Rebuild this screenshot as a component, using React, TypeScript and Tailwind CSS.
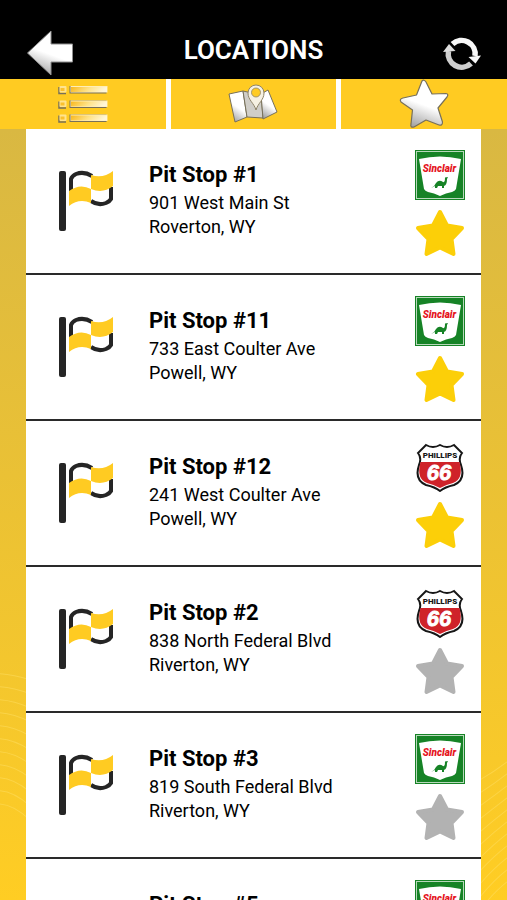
import { useState } from "react";

type Brand = "sinclair" | "phillips";
type Stop = { id: number; street: string; city: string; brand: Brand; favorite: boolean };

const stops: Stop[] = [
  { id: 1, street: "901 West Main St", city: "Roverton, WY", brand: "sinclair", favorite: true },
  { id: 11, street: "733 East Coulter Ave", city: "Powell, WY", brand: "sinclair", favorite: true },
  { id: 12, street: "241 West Coulter Ave", city: "Powell, WY", brand: "phillips", favorite: true },
  { id: 2, street: "838 North Federal Blvd", city: "Riverton, WY", brand: "phillips", favorite: false },
  { id: 3, street: "819 South Federal Blvd", city: "Riverton, WY", brand: "sinclair", favorite: false },
  { id: 5, street: "", city: "", brand: "sinclair", favorite: false },
];

function Gradients() {
  return (
    <svg className="absolute size-0" aria-hidden="true">
      <defs>
        <linearGradient id="silver" x1="0.6" y1="0.2" x2="0.3" y2="1">
          <stop offset="0.4" stopColor="#ffffff" />
          <stop offset="1" stopColor="#a2a2a2" />
        </linearGradient>
        <linearGradient id="gold" x1="0" y1="0" x2="1" y2="0.15">
          <stop offset="0" stopColor="#f9b81c" />
          <stop offset="0.55" stopColor="#ffe38a" />
          <stop offset="1" stopColor="#fff6d8" />
        </linearGradient>
      </defs>
    </svg>
  );
}

function BackIcon() {
  return (
    <svg viewBox="0 0 48 48" className="size-12" aria-hidden="true">
      <path d="M1.500 25 L25 3 V16 H46.500 V34 H25 V47 Z" fill="url(#silver)" stroke="#8f8f8f" strokeWidth="1" strokeLinejoin="round" />
    </svg>
  );
}

function RefreshIcon() {
  return (
    <svg viewBox="0 0 38 34" className="h-[34px] w-[38px]" aria-hidden="true">
      <path d="M9.500 7 A13.500 13.500 0 0 1 32 19" fill="none" stroke="#f7f7f7" strokeWidth="5.500" />
      <path d="M38 18.500 L32.500 26.500 L25.500 20 Z" fill="#f7f7f7" />
      <path d="M28 26.500 A13.500 13.500 0 0 1 5.500 14" fill="none" stroke="#cfcfcf" strokeWidth="5.500" />
      <path d="M0 15 L6 7 L12.500 14 Z" fill="#dedede" />
    </svg>
  );
}

function ListIcon() {
  return (
    <svg viewBox="0 0 50 38" className="h-[38px] w-[50px]" aria-hidden="true">
      {[1, 15.5, 29.5].map((y) => (
        <g key={y}>
          <path d={`M1 ${y + 1} v6.500 h7`} fill="none" stroke="#77705a" strokeWidth="1.500" />
          <rect x="1.500" y={y} width="7" height="6.500" rx="1" fill="#ffe48f" />
          <rect x="2.500" y={y + 2} width="4" height="3" fill="#fbc02d" />
          <rect x="11.500" y={y} width="37" height="7.500" fill="#77705a" />
          <rect x="12.500" y={y} width="37" height="6.500" fill="#ffeeb8" />
          <rect x="13" y={y + 1} width="36" height="5" fill="url(#gold)" />
        </g>
      ))}
    </svg>
  );
}

function MapIcon() {
  return (
    <svg viewBox="0 0 51 42" className="h-[42px] w-[51px]" aria-hidden="true">
      <g stroke="#77705a" strokeWidth="1" strokeLinejoin="round">
        <path d="M1 11 L15 8 L19 34 L7 39 Z" fill="url(#silver)" />
        <path d="M15 8 L24 10 L33 10 L35 35 L19 34 Z" fill="#d0cec8" />
        <path d="M33 11 L40 7 L49 29 L35 36 Z" fill="url(#silver)" />
      </g>
      <path d="M28 27 C26 20 20 17 20 10 A8 8 0 0 1 36 10 C36 17 30 20 28 27 Z" fill="#f6f1e2" stroke="#8d8368" strokeWidth="1" />
      <circle cx="28" cy="9.500" r="4.500" fill="#ffcb22" stroke="#8d8368" strokeWidth="0.800" />
    </svg>
  );
}

function SilverStarIcon() {
  return (
    <svg viewBox="0 0 50 50" className="size-[50px]" aria-hidden="true">
      <path
        d="M23 2 Q25 0 27 3 L33 15 L47 14.500 Q50 15 48 18 L39 29 L43.500 43 Q43.500 47 40 46 L27 41 L15 48 Q11 49 12 45 L13.500 31 L2 23 Q0 20 4 19 L17.500 16 Z"
        fill="url(#silver)"
        stroke="#77705a"
        strokeWidth="1.200"
        strokeLinejoin="round"
      />
    </svg>
  );
}

function FlagIcon() {
  return (
    <svg viewBox="0 0 56 62" className="h-[62px] w-14 shrink-0" aria-hidden="true">
      <rect x="1" y="1" width="7" height="60" rx="2" fill="#252525" />
      <path d="M13 21 V9 Q14 6 18 4 Q26 1 34 6" fill="none" stroke="#252525" strokeWidth="4" />
      <path d="M53 17 V29 Q52 31 48 33 Q40 36 33 31" fill="none" stroke="#252525" strokeWidth="4" />
      <path d="M33 5 Q45 9 55 1 V16 Q45 24 33 19 Z" fill="#ffcb22" />
      <path d="M11 21 Q22 13 33 19 V33 Q21 28 11 36 Z" fill="#ffcb22" />
    </svg>
  );
}

function SinclairLogo() {
  return (
    <svg viewBox="0 0 50 50" className="size-[50px]" role="img" aria-label="Sinclair">
      <rect width="50" height="50" fill="#168326" />
      <rect x="1.500" y="1.500" width="47" height="47" fill="none" stroke="#b8d8bb" strokeWidth="1" />
      <path d="M4 9 Q25 4 46 9 L41 39 Q40 41 37 42 Q31 43 25 46 Q19 43 13 42 Q10 41 9 39 Z" fill="#ffffff" />
      <text x="24.500" y="22" textAnchor="middle" fontFamily="Roboto, sans-serif" fontSize="10" fontWeight="900" fontStyle="italic" fill="#e5141d">
        Sinclair
      </text>
      <path d="M16 38 Q20 36 21 33 Q24 29 28 32 Q30 33 30 27.500 L33 27 L32 29 Q32 35 29 36 V38 H27 V36 H23 L22 38 H20 V36 Z" fill="#168326" />
    </svg>
  );
}

function PhillipsLogo() {
  return (
    <svg viewBox="0 0 50 50" className="size-[50px]" role="img" aria-label="Phillips 66">
      <path
        d="M11 3 Q18 7 25 3 Q32 7 39 3 L47 11 Q43 16 46 23 Q51 38 39 43 Q30 45 25 49 Q20 45 11 43 Q-1 38 4 23 Q7 16 3 11 Z"
        fill="#ffffff"
        stroke="#161616"
        strokeWidth="2"
      />
      <path d="M5.500 20 H44.500 Q49 37 38 41 Q30 43 25 46 Q20 43 12 41 Q1 37 5.500 20 Z" fill="#cf2229" />
      <text x="25" y="16" textAnchor="middle" fontFamily="Roboto, sans-serif" fontSize="8" fontWeight="900" fill="#161616">
        PHILLIPS
      </text>
      <text x="24" y="38" textAnchor="middle" fontFamily="Liberation Sans, sans-serif" fontSize="22" fontWeight="700" fontStyle="italic" fill="#ffffff" stroke="#ffffff" strokeWidth="0.800">
        66
      </text>
    </svg>
  );
}

function FavoriteIcon({ on }: { on: boolean }) {
  return (
    <svg viewBox="0 0 50 48" className={on ? "h-12 w-[50px] text-[#fccf08]" : "h-12 w-[50px] text-[#b2b2b2]"} aria-hidden="true">
      <path
        d="M25 3 L32 16.500 L47 19 L36.500 30 L38.500 45 L25 38.500 L11.500 45 L13.500 30 L3 19 L18 16.500 Z"
        fill="currentColor"
        stroke="currentColor"
        strokeWidth="4"
        strokeLinejoin="round"
      />
    </svg>
  );
}

function Backdrop() {
  return (
    <svg viewBox="0 0 507 770" preserveAspectRatio="none" className="absolute inset-0 size-full" aria-hidden="true">
      <g fill="none" stroke="#ffdf63" strokeWidth="1" opacity="0.5">
        {[0, 1, 2, 3, 4, 5, 6, 7, 8, 9, 10].map((i) => (
          <path key={i} d={`M0 ${544 + i * 13} Q14 ${545 + i * 13} 30 ${550 + i * 14} M480 ${650 + i * 13} Q494 ${642 + i * 12} 507 ${632 + i * 12}`} />
        ))}
      </g>
    </svg>
  );
}

function StopRow({ stop }: { stop: Stop }) {
  const [favorite, setFavorite] = useState(stop.favorite);
  return (
    <li className="flex h-[146px] shrink-0 items-start border-b-2 border-[#2a2a2a] pt-[21px] pr-4 pl-8">
      <div className="pt-5">
        <FlagIcon />
      </div>
      <div className="min-w-0 flex-1 pt-[9px] pl-[35px]">
        <h2 className="text-[22px] leading-8 font-bold">Pit Stop #{stop.id}</h2>
        <p className="text-[18px] leading-6">{stop.street}</p>
        <p className="text-[18px] leading-6">{stop.city}</p>
      </div>
      <div className="flex flex-col items-center gap-[9px]">
        {stop.brand === "sinclair" ? <SinclairLogo /> : <PhillipsLogo />}
        <button type="button" aria-label="Favorite" aria-pressed={favorite} onClick={() => setFavorite(!favorite)}>
          <FavoriteIcon on={favorite} />
        </button>
      </div>
    </li>
  );
}

export default function App() {
  return (
    <div className="flex h-screen flex-col overflow-hidden bg-white font-[Roboto,sans-serif] text-black">
      <Gradients />
      <header className="grid h-[79px] shrink-0 grid-cols-[1fr_auto_1fr] items-end bg-black px-[26px]">
        <button type="button" aria-label="Back" className="mb-[3px] justify-self-start">
          <BackIcon />
        </button>
        <h1 className="mb-[13px] text-[26px] leading-8 font-semibold text-white">LOCATIONS</h1>
        <button type="button" aria-label="Refresh" className="mb-2 justify-self-end">
          <RefreshIcon />
        </button>
      </header>
      <nav className="grid h-[50px] shrink-0 grid-cols-3 gap-[5px]">
        <button type="button" aria-label="List" className="flex items-center justify-center bg-[#ffcb22]">
          <ListIcon />
        </button>
        <button type="button" aria-label="Map" className="flex items-center justify-center bg-[#ffcb22]">
          <MapIcon />
        </button>
        <button type="button" aria-label="Favorites" className="flex items-center justify-center bg-[#ffcb22]">
          <SilverStarIcon />
        </button>
      </nav>
      <main className="relative min-h-0 flex-1 bg-linear-to-b from-[#d9b842] via-[#ecc233] to-[#ffcd23] px-[26px]">
        <Backdrop />
        <ul className="relative h-full overflow-y-auto bg-white [scrollbar-width:none]">
          {stops.map((stop) => (
            <StopRow key={stop.id} stop={stop} />
          ))}
        </ul>
      </main>
    </div>
  );
}
